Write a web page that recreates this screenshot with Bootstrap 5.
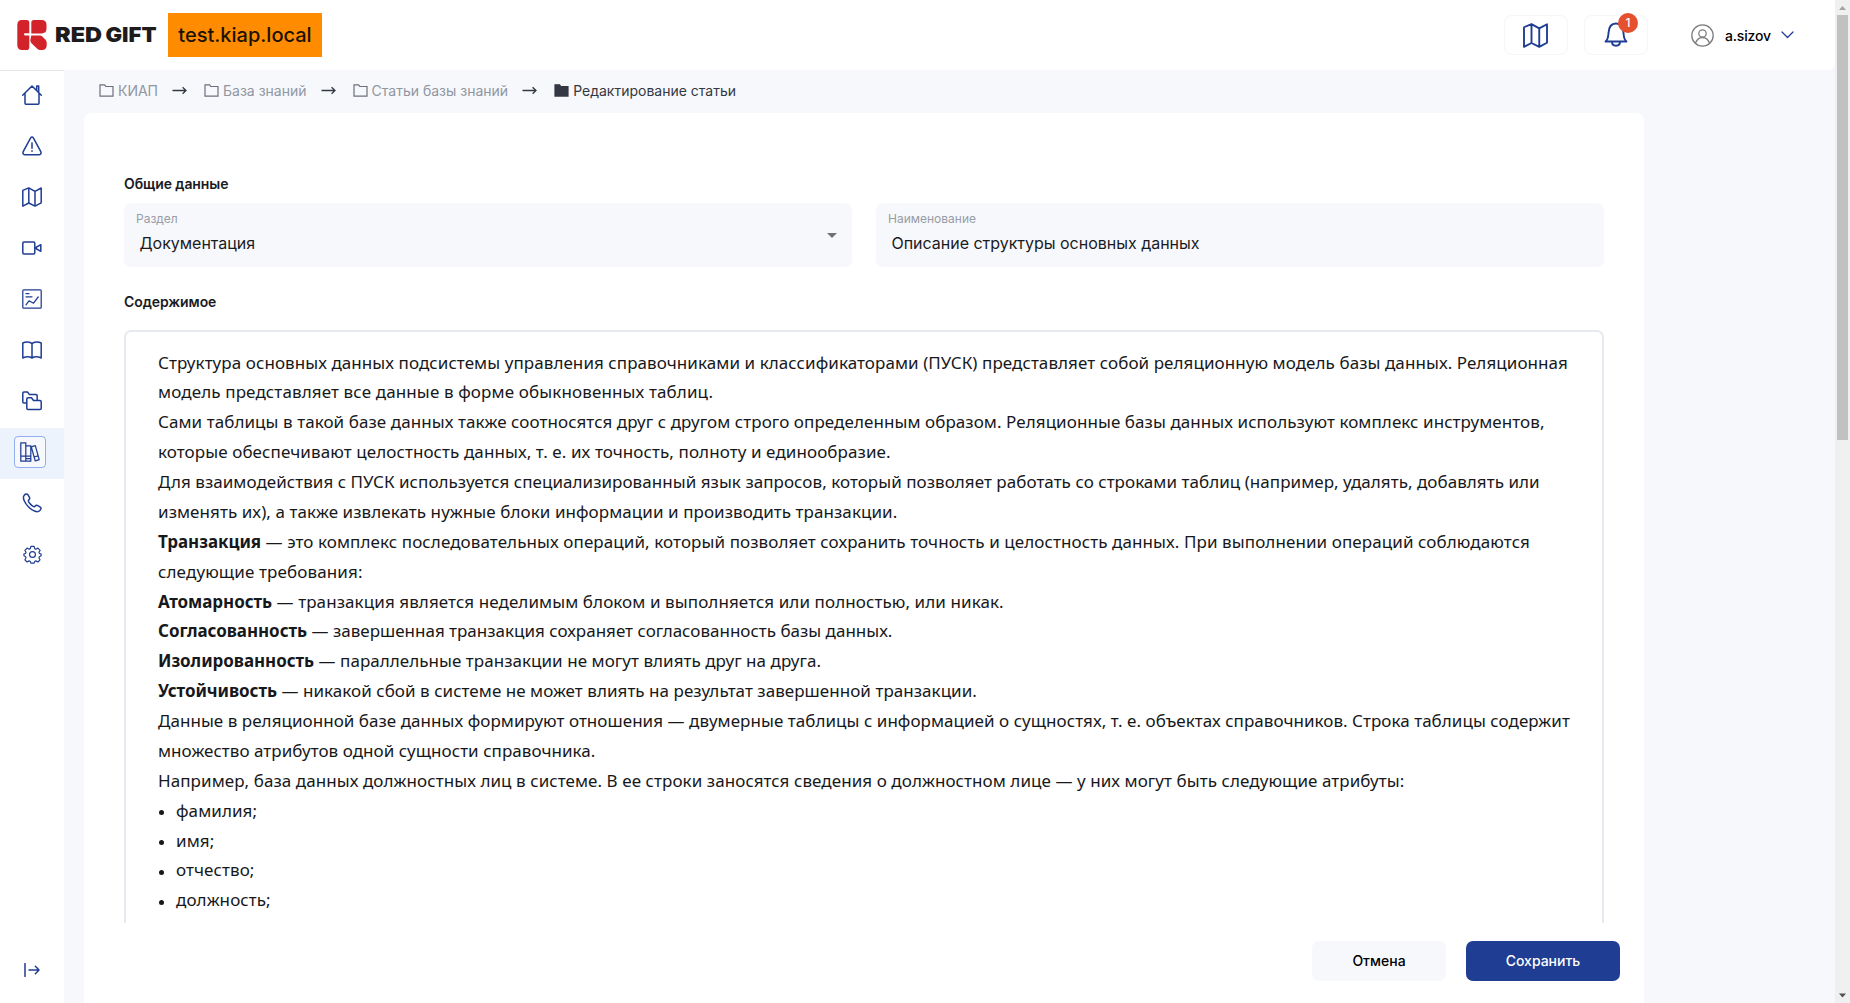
<!DOCTYPE html>
<html lang="ru">
<head>
<meta charset="utf-8">
<meta name="viewport" content="width=device-width, initial-scale=1">
<title>Редактирование статьи</title>
<link rel="stylesheet" href="https://cdn.jsdelivr.net/npm/bootstrap@5.3.0/dist/css/bootstrap.min.css">
<script src="https://cdn.jsdelivr.net/npm/bootstrap@5.3.0/dist/js/bootstrap.bundle.min.js"></script>
<style>
:root{--brand:#1f3d93;--page:#f6f8fc}
body{font-family:Inter,"Liberation Sans",sans-serif;font-size:14px;color:#1a1b1f;background:var(--page);height:100vh;overflow:hidden}
svg{display:block;flex:none}
.line-icon{fill:none;stroke:var(--brand);stroke-width:1.5;stroke-linejoin:round;stroke-linecap:round}
.line-bold{stroke-width:1.9}
.line-thin{stroke-width:1.25}
.topbar{height:70px;padding:0 41px 0 17px;background:#fff;border-bottom-right-radius:7px}
.host-tag{background:#ff8c00;color:#1a1200;font-size:20px;font-weight:500;width:154px;height:44px;margin:0 0 1px 11px}
.tool-btn{width:64px;height:40px;border:1px solid #f6f6f7;border-radius:8px;background:#fff;padding:0}
.count-badge{left:33px;top:-3px;width:20px;height:20px;background:#e5502f;color:#fff;font-size:12px;font-weight:500}
.account{margin-left:43px}
.user-name{font-weight:500;color:#000;letter-spacing:-.15px;margin:0 10px 0 11px}
.side{width:64px;background:#fff;border-top:1px solid #e6e6e6}
.side-link{height:51px;padding-bottom:3px}
.side-link.active{background:#ecf3fc}
.active .icon-frame{width:32px;height:32px;margin-right:4px;border:1px solid #93aef0;border-radius:4px;background:var(--page)}
.side-exit{padding-bottom:26px}
.crumbs{height:43px;padding:0 0 3px 14px;color:#9196a1}
.crumb-item{gap:4px}
.crumb-now{color:#343842}
.crumb-folder{fill:none;stroke:#6d6f7c;stroke-width:1.2;margin-left:1px}
.crumb-now .crumb-folder{fill:#343842;stroke:#343842}
.crumb-arrow{fill:none;stroke:#343842;stroke-width:1.3;margin:0 16px 0 14px}
.sheet{width:1560px;background:#fff;border-radius:8px 8px 0 0;padding:0 40px}
.sec-title{font-size:14px;font-weight:600;line-height:20px;letter-spacing:-.08px}
.sec-first{margin:61px 0 9px}
.sec-next{margin:25px 0 18px}
.field-box{background:var(--page);border-radius:7px;height:64px;padding:7px 12px 0}
.field-name{font-size:12px;line-height:17px;color:#989ca6}
.field-value{font-size:16px;line-height:24px;padding:4px 0 0 3.500px;letter-spacing:-.02px}
.caret-box{padding:0 3px 7px 0}
.editor{height:593px;border:2px solid #e6eaee;border-bottom:0;border-radius:7px 7px 0 0;padding:15.600px 0 0 32px;overflow:hidden;font-family:"Noto Sans",sans-serif;font-size:17px;line-height:29.880px;letter-spacing:.07px;color:#17181b}
.editor p{margin:0;white-space:nowrap}
.editor b{font-weight:700;letter-spacing:-.05px}
.editor .t0{letter-spacing:.044px}
.editor .t1{letter-spacing:.09px}
.editor .t2{letter-spacing:.125px}
.editor ul{list-style:none;margin:0;padding:0}
.editor li{display:flex;align-items:center;gap:12px;letter-spacing:.08px}
.editor li::before{content:"";width:5px;height:5px;border-radius:50%;background:#17181b;margin:4px 0 0 1px}
.form-actions{gap:20px;margin:18px -16px 0 0}
.act-btn{height:40px;border-radius:7px;font-size:14px;font-weight:500;padding:0 0 1px;border:0}
.act-cancel{width:134px;background:var(--page);color:#000}
.act-save{width:154px;background:#1f3d93;color:#fff}
.scroll-track{width:15px;background:#f0f0f0}
.scroll-thumb{width:11px;height:425px;background:#c1c1c1}
</style>
</head>
<body class="d-flex">
<svg width="0" height="0" class="position-absolute">
  <defs>
    <symbol id="map" viewBox="0 0 20 20"><path d="M.8 3.400 6.800.9 13 4.300 19.200 1v14.800L13 19.100 6.800 16 .8 19.100zM6.800.9V16M13 4.300v14.800"/></symbol>
    <symbol id="folder" viewBox="0 0 15 13"><path d="M1 .8h4.600l1.200 1.700H14v9.600H1z"/></symbol>
    <symbol id="arrow" viewBox="0 0 15 9"><path d="M.5 4.500h13.300M10.600 1.200l3.400 3.300-3.400 3.300"/></symbol>
  </defs>
</svg>
<div class="flex-grow-1 d-flex flex-column">
  <header class="topbar d-flex align-items-center flex-shrink-0">
    <svg width="30" height="30" viewBox="0 0 30 30" fill="#d2232a"><path d="M5 0h4.500q2.800 0 2.800 2.800v10.400H8c-1.400 0-1.400 2.200 0 2.200h4.300v11.800q0 2.800-2.800 2.800H5q-4.700 0-4.700-5V5q0-5 4.700-5z"/><path d="M14.300 2.500Q14.300 0 17 0h7.500q5 0 5 5v3.500q0 4.900-5 4.900H14.300z"/><path d="M14.300 15.400H23q1.200 0 2 .8l3.300 3.400q1.400 1.400 1.400 3.200v2.500q0 4.700-4.700 4.700h-1.800q-1.800 0-3-1.200l-5.400-5.200q-1.500-1.400-1.500-3.400z"/></svg>
    <svg class="ms-2" width="102" height="24" viewBox="0 0 102 24"><g font-family="Inter, sans-serif" font-weight="900" font-size="20.500" fill="#1d1b1b"><text x="0" y="19.300" textLength="47" lengthAdjust="spacingAndGlyphs">RED</text><text x="50.500" y="19.300" textLength="51" lengthAdjust="spacingAndGlyphs">GIFT</text></g></svg>
    <div class="host-tag d-flex align-items-center justify-content-center">test.kiap.local</div>
    <div class="ms-auto d-flex align-items-center">
      <button class="tool-btn d-flex align-items-center justify-content-center"><svg class="line-icon" width="25" height="25"><use href="#map"/></svg></button>
      <button class="tool-btn position-relative d-flex align-items-center justify-content-center ms-3">
        <svg class="line-icon line-bold" width="24" height="26" viewBox="0 0 24 26"><path d="M1.500 19.500C4.200 17.500 4.200 15 4.500 11 4.800 5.500 7.300 1.500 12 1.500s7.200 4 7.500 9.500c.3 4 .3 6.500 3 8.500zM8 19.700c0 5.300 8 5.300 8 0"/></svg>
        <span class="count-badge position-absolute rounded-circle d-flex align-items-center justify-content-center">1</span>
      </button>
      <div class="account d-flex align-items-center">
        <svg width="23" height="23" viewBox="0 0 23 23" fill="none" stroke="#7d7d7d" stroke-width="1.300"><circle cx="11.500" cy="11.500" r="10.700"/><circle cx="11.500" cy="9.500" r="3.700"/><path d="M4.300 19.300c1.500-3.600 4-5.800 7.200-5.800s5.700 2.200 7.200 5.800"/></svg>
        <span class="user-name">a.sizov</span>
        <svg class="line-icon line-thin" width="13" height="8" viewBox="0 0 13 8"><path d="M1 1l5.500 5.500L12 1"/></svg>
      </div>
    </div>
  </header>
  <div class="d-flex flex-grow-1 overflow-hidden">
    <nav class="side d-flex flex-column flex-shrink-0">
      <a class="side-link d-flex align-items-center justify-content-center"><svg class="line-icon" width="20" height="20" viewBox="0 0 20 20"><path d="M.7 10.300 10 1l9.300 9.300M3 8.300V18.300q0 .9.9.9h12.200q.9 0 .9-.9V8.300M14.700 5.500V1h2v6.500"/></svg></a>
      <a class="side-link d-flex align-items-center justify-content-center"><svg class="line-icon" width="20" height="20" viewBox="0 0 20 20"><path d="M8.500 2.200q1.500-2.200 3 0l7.300 13.500q.9 2.800-1.600 3H2.800q-2.500-.2-1.600-3zM10 7v5.200M10 14.700v.6"/></svg></a>
      <a class="side-link d-flex align-items-center justify-content-center"><svg class="line-icon" width="20" height="20"><use href="#map"/></svg></a>
      <a class="side-link d-flex align-items-center justify-content-center"><svg class="line-icon" width="20" height="20" viewBox="0 0 20 20"><rect x=".8" y="4" width="12" height="12" rx="1.200"/><path d="M13 10l5.800-3.300v6.600z"/></svg></a>
      <a class="side-link d-flex align-items-center justify-content-center"><svg class="line-icon line-thin" width="20" height="20" viewBox="0 0 20 20"><rect x=".8" y=".8" width="18.400" height="18.400" rx="1"/><path d="M4 4.500h3M4 7.800h6M4 15.800l3-4 4.500 2.400 4.700-6.200"/></svg></a>
      <a class="side-link d-flex align-items-center justify-content-center"><svg class="line-icon" width="20" height="20" viewBox="0 0 20 20"><path d="M10 3.600C8 1.600 3.500 1.600.8 3v15c3-1.300 7-1.300 9.200 0 2.200-1.300 6.200-1.300 9.200 0V3C16.500 1.600 12 1.600 10 3.600zV18"/></svg></a>
      <a class="side-link d-flex align-items-center justify-content-center"><svg class="line-icon" width="20" height="20" viewBox="0 0 20 20"><path d="M4.800 12H2q-1.200 0-1.200-1.200V2.200Q.8 1 2 1h3.500l2 2.600H14q1.200 0 1.200 1.200V8.800M4.800 8q0-1.200 1.200-1.200h3.500l2 2.700H18q1.200 0 1.200 1.200v6.600q0 1.200-1.200 1.200H6q-1.200 0-1.200-1.200z"/></svg></a>
      <a class="side-link active d-flex align-items-center justify-content-center"><span class="icon-frame d-flex align-items-center justify-content-center"><svg class="line-icon line-thin" width="20" height="20" viewBox="0 0 20 20"><path d="M.8.800h5v18.400h-5zM.8 14h5M5.800 3.800h5v15.400h-5M5.800 14h5M5.800 16.500h5M11.300 4.800l4-1.200 3.900 14-4 1.200zM14 15l4-1.200"/></svg></span></a>
      <a class="side-link d-flex align-items-center justify-content-center"><svg class="line-icon" width="20" height="20" viewBox="0 0 20 20"><path d="M2 2.600C3.300.9 5 .5 5.900 1.700l1.700 3c.5 1.200-.2 1.800-1 2.500-.8.800 0 2.200 2 4.200s3.400 2.800 4.200 2c.7-.8 1.300-1.500 2.500-1l3 1.700c1.200.9.8 2.600-.9 3.900-2.300 1.700-7-.2-10.800-4S.3 4.900 2 2.600z"/></svg></a>
      <a class="side-link d-flex align-items-center justify-content-center"><svg class="line-icon line-thin" width="19" height="19" viewBox="0 0 20 20"><circle cx="10" cy="10" r="3.100"/><path d="M8.300 1.500h3.400l.6 2.300 1.300.6 2.100-1.200 2.300 2.400-1.200 2 .5 1.300 1.700.5v2l-1.700.9-.5 1.200 1.100 2.100-2.200 2.300-2.200-1.200-1.200.6-.6 1.800H8.300l-.6-1.800-1.300-.6-2.100 1.200L2 15.600l1.200-2.100-.5-1.200L1 11.400v-2l1.700-.5.5-1.300-1.200-2 2.300-2.400 2.100 1.200 1.300-.6z"/></svg></a>
      <a class="side-exit mt-auto d-flex justify-content-center"><svg class="line-icon" width="16" height="14" viewBox="0 0 16 14"><path d="M1 .6v12.800M5 7h10M11.400 3.200 15 7l-3.600 3.800"/></svg></a>
    </nav>
    <main class="flex-grow-1 d-flex flex-column ps-0">
      <div class="ms-1 ps-3 d-flex flex-column flex-grow-1">
      <div class="crumbs d-flex align-items-center flex-shrink-0">
        <div class="crumb-item d-flex align-items-center"><svg class="crumb-folder" width="15" height="13"><use href="#folder"/></svg><span>КИАП</span></div>
        <svg class="crumb-arrow" width="15" height="9"><use href="#arrow"/></svg>
        <div class="crumb-item d-flex align-items-center"><svg class="crumb-folder" width="15" height="13"><use href="#folder"/></svg><span>База знаний</span></div>
        <svg class="crumb-arrow" width="15" height="9"><use href="#arrow"/></svg>
        <div class="crumb-item d-flex align-items-center"><svg class="crumb-folder" width="15" height="13"><use href="#folder"/></svg><span>Статьи базы знаний</span></div>
        <svg class="crumb-arrow" width="15" height="9"><use href="#arrow"/></svg>
        <div class="crumb-item crumb-now d-flex align-items-center"><svg class="crumb-folder" width="15" height="13"><use href="#folder"/></svg><span>Редактирование статьи</span></div>
      </div>
      <section class="sheet flex-grow-1 d-flex flex-column">
        <h2 class="sec-title sec-first">Общие данные</h2>
        <div class="row gx-4">
          <div class="col-6"><div class="field-box d-flex justify-content-between">
            <div><div class="field-name">Раздел</div><div class="field-value">Документация</div></div>
            <div class="caret-box d-flex align-items-center"><svg width="10" height="5" viewBox="0 0 10 5" fill="#6f7175"><path d="M0 0h10L5 5z"/></svg></div>
          </div></div>
          <div class="col-6"><div class="field-box"><div class="field-name">Наименование</div><div class="field-value">Описание структуры основных данных</div></div></div>
        </div>
        <h2 class="sec-title sec-next">Содержимое</h2>
        <article class="editor flex-shrink-0">
          <p>Структура основных данных подсистемы управления справочниками и классификаторами (ПУСК) представляет собой реляционную модель базы данных. Реляционная<br><span class="t2">модель представляет все данные в форме обыкновенных таблиц.</span></p>
          <p>Сами таблицы в такой базе данных также соотносятся друг с другом строго определенным образом. Реляционные базы данных используют комплекс инструментов,<br><span class="t1">которые обеспечивают целостность данных, т. е. их точность, полноту и единообразие.</span></p>
          <p><span class="t0">Для взаимодействия с ПУСК используется специализированный язык запросов, который позволяет работать со строками таблиц (например, удалять, добавлять или</span><br>изменять их), а также извлекать нужные блоки информации и производить транзакции.</p>
          <p><b>Транзакция</b> <span class="t1">— это комплекс последовательных операций, который позволяет сохранить точность и целостность данных. При выполнении операций соблюдаются</span><br><span class="t2">следующие требования:</span></p>
          <p class="t1"><b>Атомарность</b> — транзакция является неделимым блоком и выполняется или полностью, или никак.</p>
          <p><b>Согласованность</b> <span style="letter-spacing:0">— завершенная транзакция сохраняет согласованность базы данных.</span></p>
          <p class="t0"><b>Изолированность</b> — параллельные транзакции не могут влиять друг на друга.</p>
          <p class="t0"><b>Устойчивость</b> — никакой сбой в системе не может влиять на результат завершенной транзакции.</p>
          <p class="t0">Данные в реляционной базе данных формируют отношения — двумерные таблицы с информацией о сущностях, т. е. объектах справочников. Строка таблицы содержит<br>множество атрибутов одной сущности справочника.</p>
          <p>Например, база данных должностных лиц в системе. В ее строки заносятся сведения о должностном лице — у них могут быть следующие атрибуты:</p>
          <ul><li>фамилия;</li><li>имя;</li><li>отчество;</li><li>должность;</li></ul>
        </article>
        <div class="form-actions d-flex justify-content-end">
          <button class="btn act-btn act-cancel">Отмена</button>
          <button class="btn act-btn act-save">Сохранить</button>
        </div>
      </section>
      </div>
    </main>
  </div>
</div>
<div class="scroll-track d-flex flex-column align-items-center flex-shrink-0">
  <svg width="9" height="15" viewBox="0 0 9 15" fill="#a3a3a3"><path d="M1 10h7L4.500 6z"/></svg>
  <div class="scroll-thumb"></div>
  <svg class="mt-auto" width="9" height="15" viewBox="0 0 9 15" fill="#505050"><path d="M1 5.500h7l-3.500 4z"/></svg>
</div>
</body>
</html>
